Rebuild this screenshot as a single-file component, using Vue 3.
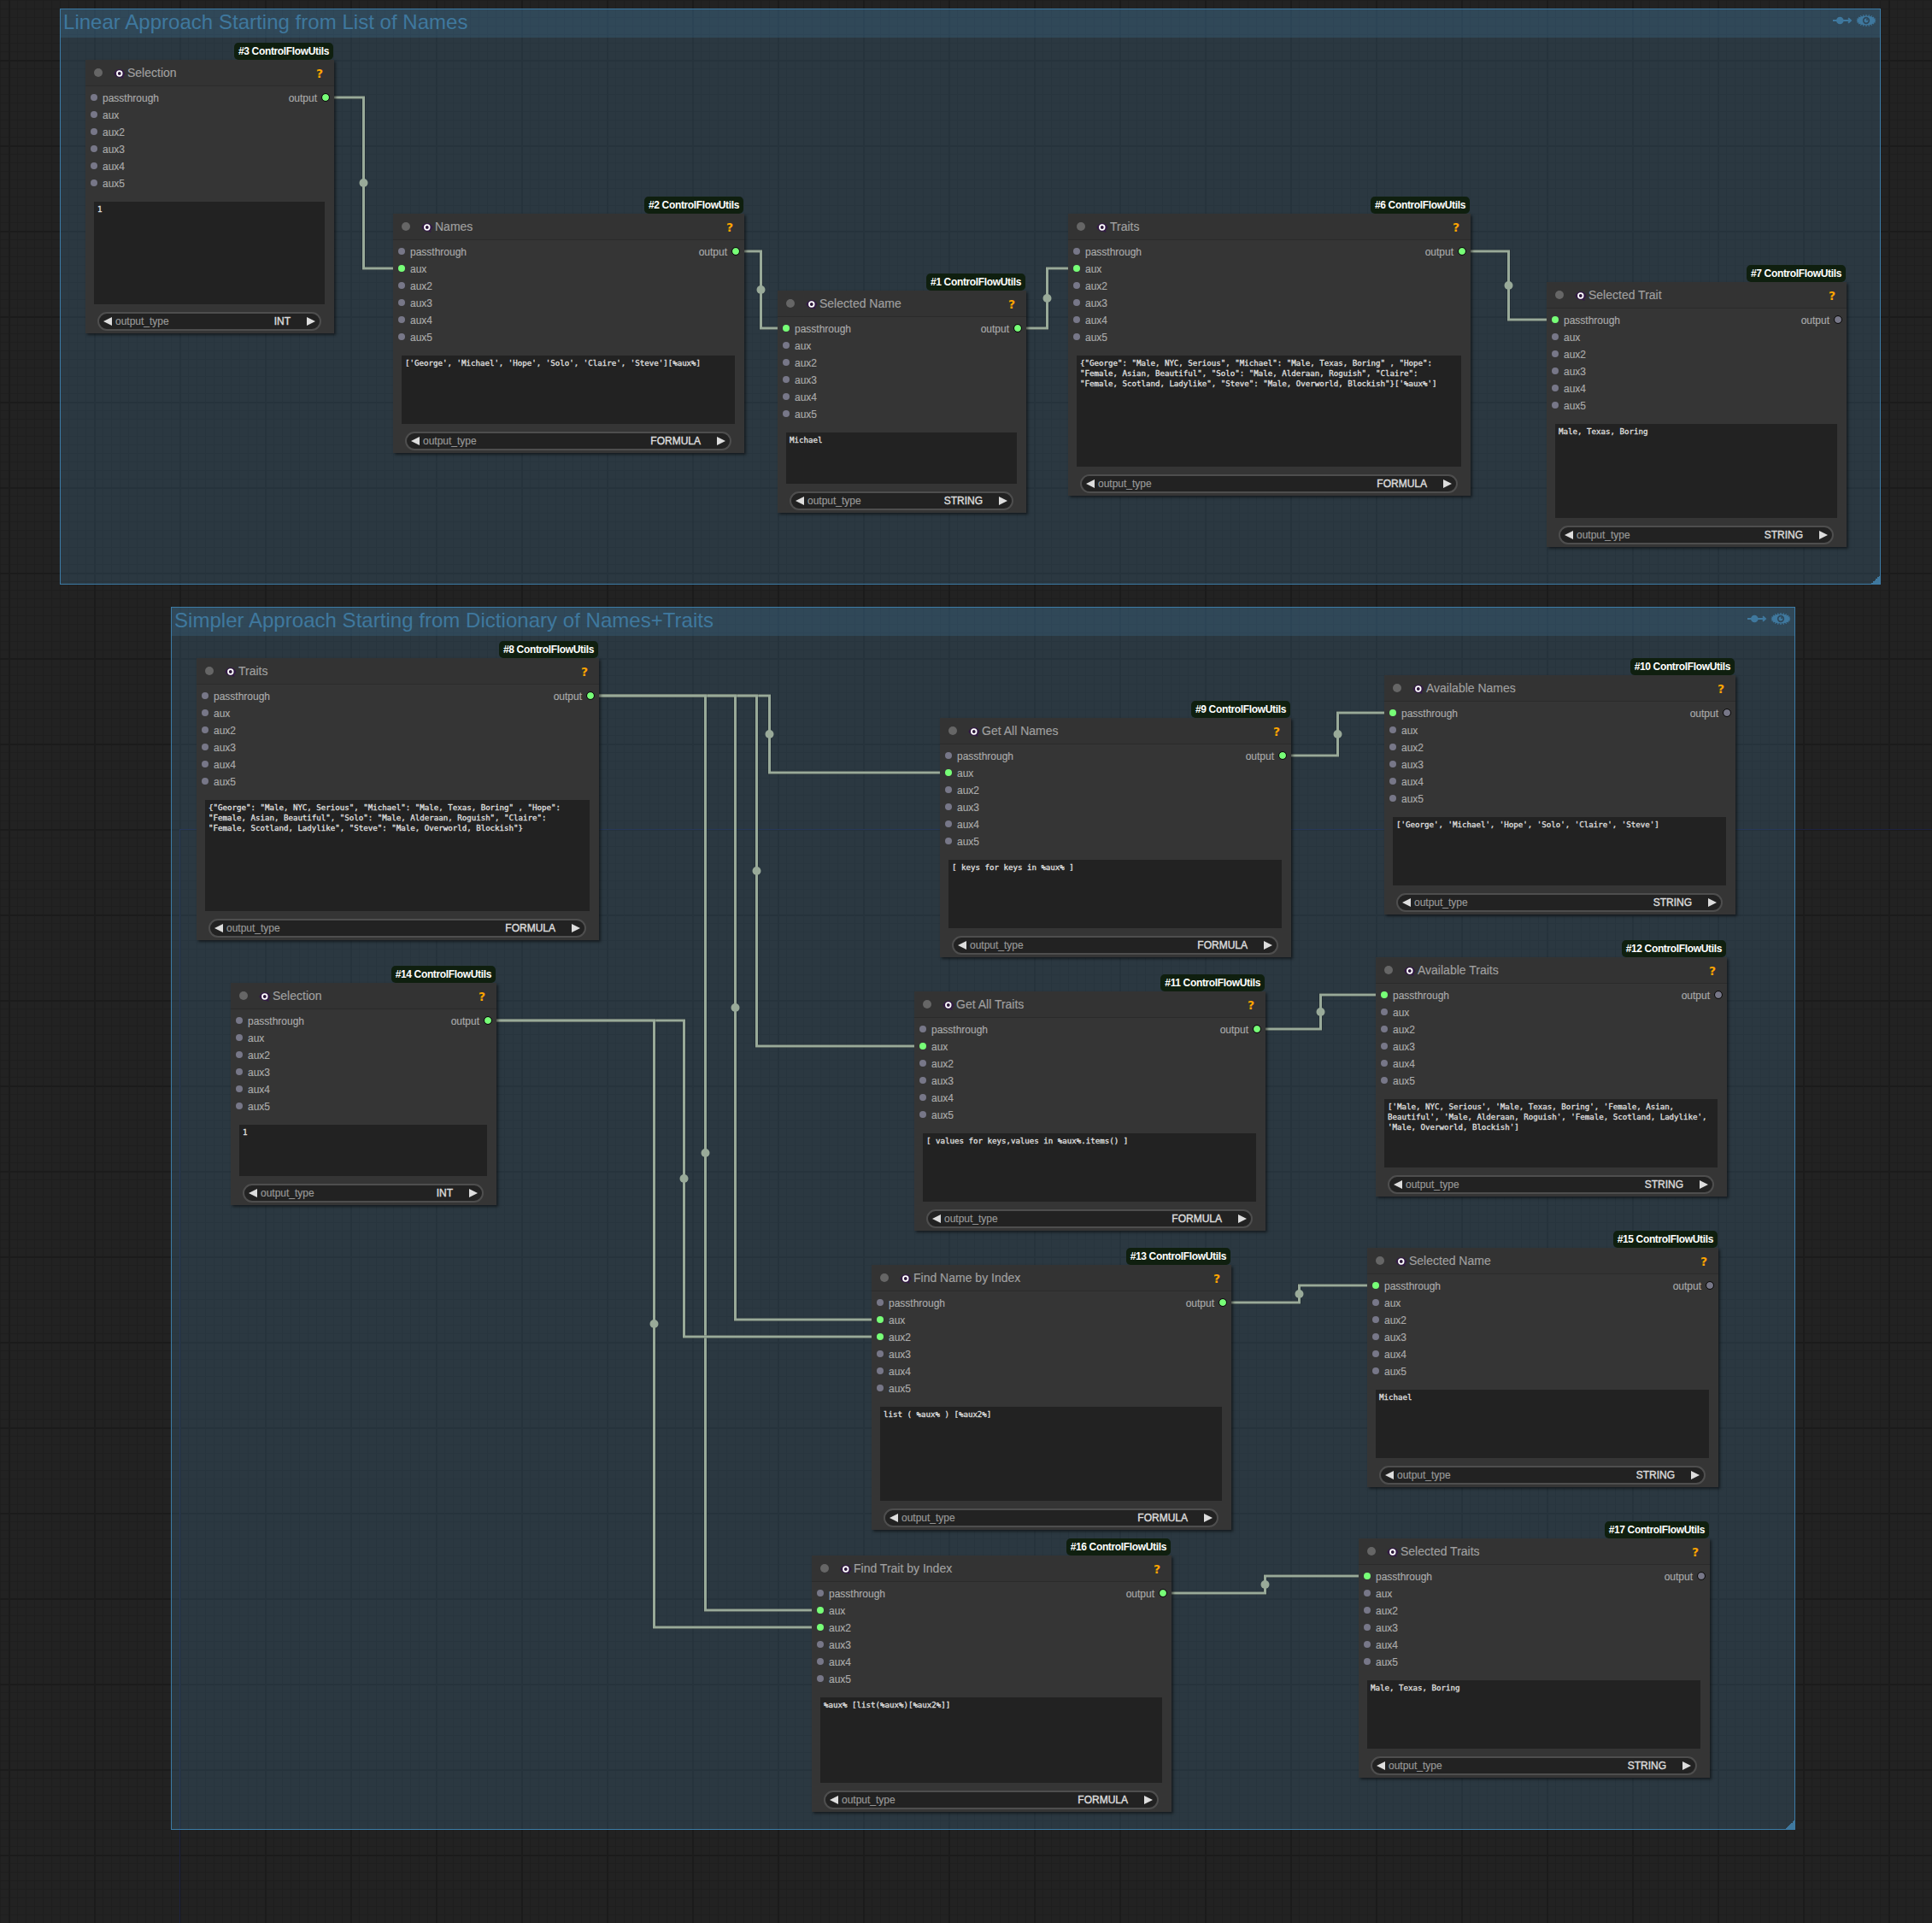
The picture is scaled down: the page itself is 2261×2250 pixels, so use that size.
<script setup>
const G = '[\'George\', \'Michael\', \'Hope\', \'Solo\', \'Claire\', \'Steve\']'
const dict = [
  '{"George": "Male, NYC, Serious", "Michael": "Male, Texas, Boring" , "Hope":',
  '"Female, Asian, Beautiful", "Solo": "Male, Alderaan, Roguish", "Claire":',
  '"Female, Scotland, Ladylike", "Steve": "Male, Overworld, Blockish"}',
].join('\n')

const inputs = ['passthrough', 'aux', 'aux2', 'aux3', 'aux4', 'aux5']

// x, y: top-left of the node body; bottom: lower edge of the node
const nodes = [
  { id: 3, title: 'Selection', x: 100, y: 100, w: 290, bottom: 390, text: '1', type: 'INT' },
  { id: 2, title: 'Names', x: 460, y: 280, w: 410, bottom: 530, text: G + '[%aux%]', type: 'FORMULA' },
  { id: 1, title: 'Selected Name', x: 910, y: 370, w: 290, bottom: 600, text: 'Michael', type: 'STRING' },
  { id: 6, title: 'Traits', x: 1250, y: 280, w: 470, bottom: 580, text: dict + "['%aux%']", type: 'FORMULA' },
  { id: 7, title: 'Selected Trait', x: 1810, y: 360, w: 350, bottom: 640, text: 'Male, Texas, Boring', type: 'STRING' },
  { id: 8, title: 'Traits', x: 230, y: 800, w: 470, bottom: 1100, text: dict, type: 'FORMULA' },
  { id: 14, title: 'Selection', x: 270, y: 1180, w: 310, bottom: 1410, text: '1', type: 'INT' },
  { id: 9, title: 'Get All Names', x: 1100, y: 870, w: 410, bottom: 1120, text: '[ keys for keys in %aux% ]', type: 'FORMULA' },
  { id: 10, title: 'Available Names', x: 1620, y: 820, w: 410, bottom: 1070, text: G, type: 'STRING' },
  { id: 11, title: 'Get All Traits', x: 1070, y: 1190, w: 410, bottom: 1440, text: '[ values for keys,values in %aux%.items() ]', type: 'FORMULA' },
  { id: 12, title: 'Available Traits', x: 1610, y: 1150, w: 410, bottom: 1400, text: "['Male, NYC, Serious', 'Male, Texas, Boring', 'Female, Asian,\nBeautiful', 'Male, Alderaan, Roguish', 'Female, Scotland, Ladylike',\n'Male, Overworld, Blockish']", type: 'STRING' },
  { id: 13, title: 'Find Name by Index', x: 1020, y: 1510, w: 420, bottom: 1790, text: 'list ( %aux% ) [%aux2%]', type: 'FORMULA' },
  { id: 15, title: 'Selected Name', x: 1600, y: 1490, w: 410, bottom: 1740, text: 'Michael', type: 'STRING' },
  { id: 16, title: 'Find Trait by Index', x: 950, y: 1850, w: 420, bottom: 2120, text: '%aux% [list(%aux%)[%aux2%]]', type: 'FORMULA' },
  { id: 17, title: 'Selected Traits', x: 1590, y: 1830, w: 410, bottom: 2080, text: 'Male, Texas, Boring', type: 'STRING' },
]

// [source node, target node, target input index]
const edges = [
  [3, 2, 1], [2, 1, 0], [1, 6, 1], [6, 7, 0],
  [8, 9, 1], [8, 11, 1], [8, 13, 1], [8, 16, 1],
  [14, 13, 2], [14, 16, 2],
  [9, 10, 0], [11, 12, 0], [13, 15, 0], [16, 17, 0],
]

const byId = Object.fromEntries(nodes.map((n) => [n.id, n]))
const links = edges.map(([from, to, slot]) => {
  const a = byId[from]
  const b = byId[to]
  const x1 = a.x + a.w - 9
  const y1 = a.y + 14
  const x2 = b.x + 10
  const y2 = b.y + 14 + slot * 20
  const mx = (x1 + x2) / 2
  return { d: `M${x1} ${y1}H${mx}V${y2}H${x2}`, mx, my: (y1 + y2) / 2 }
})

const hasIn = (id, slot) => edges.some((e) => e[1] === id && e[2] === slot)
const hasOut = (id) => edges.some((e) => e[0] === id)

const groups = [
  { title: 'Linear Approach Starting from List of Names', x: 70, y: 10, w: 2131, h: 674 },
  { title: 'Simpler Approach Starting from Dictionary of Names+Traits', x: 200, y: 710, w: 1901, h: 1431 },
]
const teeth = Array.from({ length: 20 }, (_, i) => {
  const t = (i / 20) * Math.PI * 2
  return `M${Math.cos(t) * 9} ${Math.sin(t) * 4.6}L${Math.cos(t) * 11.2} ${Math.sin(t) * 7}`
}).join('')
</script>

<template>
  <main class="canvas">
    <div class="axis axis-x"></div>
    <div class="axis axis-y"></div>

    <section
      v-for="g in groups"
      :key="g.title"
      class="group"
      :style="{ left: g.x + 'px', top: g.y + 'px', width: g.w + 'px', height: g.h + 'px' }"
    >
      <header class="group-head">
        <h2>{{ g.title }}</h2>
        <svg class="group-icons" width="54" height="14" viewBox="0 0 54 14">
          <path d="M2 7H23M20 4.2L23 7L20 9.8" fill="none" stroke="#3f789e" stroke-width="1.9" />
          <circle cx="10.3" cy="7" r="4.3" fill="#3f789e" />
          <g transform="translate(41 7)">
            <path :d="teeth" stroke="#3f789e" stroke-width="1.2" />
            <ellipse rx="10.6" ry="5.4" fill="#3f789e" />
            <circle r="3.3" fill="none" stroke="#2e485b" stroke-width="1.7" />
            <circle cx="1" cy="-1" r="1" fill="#2e485b" />
          </g>
        </svg>
      </header>
      <i class="resize"></i>
    </section>

    <svg class="links" width="2261" height="2250" viewBox="0 0 2261 2250">
      <g v-for="(l, i) in links" :key="i">
        <path :d="l.d" class="link-edge" />
        <path :d="l.d" class="link-core" />
      </g>
      <circle v-for="(l, i) in links" :key="'c' + i" :cx="l.mx" :cy="l.my" r="5" fill="#9a9" />
    </svg>

    <article
      v-for="n in nodes"
      :key="n.id"
      class="node"
      :style="{ left: n.x + 'px', top: n.y - 30 + 'px', width: n.w + 1 + 'px', height: n.bottom - n.y + 30 + 'px' }"
    >
      <span class="badge">#{{ n.id }} ControlFlowUtils</span>
      <header class="node-head">
        <i class="dot"></i>
        <svg class="mark" width="14" height="14" viewBox="0 0 14 14">
          <path d="M0.3 7Q3 2 7 2T13.5 7Q12.8 9 11 10.4L11.6 13L8.8 11.9Q3 12.4 0.3 7Z" fill="#331b45" />
          <circle cx="6.8" cy="7" r="2.8" fill="#2a1638" stroke="#fff" stroke-width="1.8" />
        </svg>
        <span class="title">{{ n.title }}</span>
        <span class="help">?</span>
      </header>
      <div class="slots">
        <ul>
          <li v-for="(s, i) in inputs" :key="s">
            <i class="pin" :class="{ on: hasIn(n.id, i) }"></i><span>{{ s }}</span>
          </li>
        </ul>
        <div class="out"><span>output</span><i class="pin ring" :class="{ on: hasOut(n.id) }"></i></div>
      </div>
      <pre class="value">{{ n.text }}</pre>
      <div class="combo">
        <svg width="10" height="10" viewBox="0 0 10 10"><path d="M10 0V10L0 5Z" fill="#ddd" /></svg>
        <span class="combo-name">output_type</span>
        <span class="combo-value">{{ n.type }}</span>
        <svg width="10" height="10" viewBox="0 0 10 10"><path d="M0 0V10L10 5Z" fill="#ddd" /></svg>
      </div>
    </article>
  </main>
</template>

<style>
body {
  margin: 0;
  background: #222;
}
</style>

<style scoped>
.canvas {
  position: relative;
  width: 2261px;
  height: 2250px;
  overflow: hidden;
  background-color: #222;
  background-image:
    linear-gradient(to right, #1b1b1b 2px, transparent 2px),
    linear-gradient(to bottom, #1b1b1b 2px, transparent 2px),
    linear-gradient(to right, #1e1e1e 1px, transparent 1px),
    linear-gradient(to bottom, #1e1e1e 1px, transparent 1px);
  background-size: 100px 100px, 100px 100px, 10px 10px, 10px 10px;
  background-position: 10px 0, 0 70px, 0 0, 0 0;
  font-family: "Liberation Sans", Arial, sans-serif;
}
.axis {
  position: absolute;
  background: #1d2242;
}
.axis-x {
  left: 210px;
  top: 970px;
  width: 2051px;
  height: 1px;
}
.axis-y {
  left: 210px;
  top: 970px;
  width: 1px;
  height: 1280px;
}
.group {
  position: absolute;
  box-sizing: border-box;
  border: 1px solid #3c7ba6;
  background: rgba(70, 122, 160, 0.25);
}
.group-head {
  display: flex;
  align-items: flex-start;
  justify-content: space-between;
  height: 33px;
  background: rgba(63, 120, 158, 0.25);
}
.group-head h2 {
  margin: 0 0 0 3px;
  font-size: 24px;
  line-height: 30px;
  font-weight: 400;
  letter-spacing: 0.03px;
  color: #3f789e;
  white-space: nowrap;
}
.group-icons {
  margin: 6px 3px 0 0;
}
.resize {
  position: absolute;
  right: 0;
  bottom: 0;
  width: 10px;
  height: 10px;
  background: linear-gradient(135deg, transparent 50%, #3f789e 50%);
}
.links {
  position: absolute;
  left: 0;
  top: 0;
}
.links path {
  fill: none;
}
.link-edge {
  stroke: rgba(0, 0, 0, 0.3);
  stroke-width: 4;
}
.link-core {
  stroke: #9a9;
  stroke-width: 3;
}
.node {
  position: absolute;
  display: flex;
  flex-direction: column;
  box-sizing: border-box;
  background: #353535;
  box-shadow: 2px 2px 3px rgba(0, 0, 0, 0.5);
  color: #aaa;
}
.badge {
  position: absolute;
  right: 1px;
  bottom: 100%;
  height: 20px;
  padding: 0 5px;
  border-radius: 5px;
  background: #0f1f0f;
  color: #fff;
  font-size: 12px;
  line-height: 20px;
  font-weight: 700;
  letter-spacing: -0.35px;
  white-space: nowrap;
}
.node-head {
  display: flex;
  align-items: center;
  box-sizing: border-box;
  flex: none;
  height: 31px;
  padding: 0 13px 0 10px;
  border-bottom: 1px solid #2b2b2b;
  background: #333;
}
.dot {
  width: 10px;
  height: 10px;
  border-radius: 50%;
  background: #666;
}
.mark {
  margin: 2px 2px 0 13px;
}
.title {
  flex: 1;
  font-size: 14px;
  color: #a0a0a0;
  -webkit-text-stroke: 0.15px;
}
.help {
  padding-top: 1px;
  font-family: "DejaVu Sans", sans-serif;
  font-weight: 700;
  font-size: 14px;
  color: #ffa500;
}
.slots {
  display: flex;
  justify-content: space-between;
  flex: none;
  height: 135px;
  padding: 3px 5px 0 6px;
  box-sizing: border-box;
  font-size: 12px;
  line-height: 18px;
  -webkit-text-stroke: 0.15px;
}
.slots ul {
  margin: 0;
  padding: 0;
  list-style: none;
}
.slots li,
.out {
  display: flex;
  align-items: center;
  height: 20px;
}
.slots span {
  padding-top: 2px;
}
.pin {
  flex: none;
  width: 8px;
  height: 8px;
  margin-right: 6px;
  border-radius: 50%;
  background: #778;
}
.pin.on {
  background: #7f7;
}
.pin.ring {
  margin: 0 0 0 5px;
  border: 1px solid #0c0c0c;
  background-clip: padding-box;
}
.value {
  flex: 1;
  margin: 0 11px 0 10px;
  padding: 3px 4px;
  background: #222;
  color: #ddd;
  font-family: "DejaVu Sans Mono", monospace;
  font-size: 9.14px;
  line-height: 12px;
  -webkit-text-stroke: 0.35px;
}
.combo {
  display: flex;
  align-items: center;
  box-sizing: border-box;
  flex: none;
  height: 22px;
  margin: 9px 15px 3px 14px;
  padding: 0 5px;
  border: 2px solid #4e4e4e;
  border-radius: 11px;
  background: #222;
  font-size: 12px;
  -webkit-text-stroke: 0.15px;
}
.combo-name {
  flex: 1;
  margin-left: 4px;
  color: #999;
}
.combo-value {
  margin-right: 19px;
  color: #ddd;
  -webkit-text-stroke: 0.4px;
}
</style>
